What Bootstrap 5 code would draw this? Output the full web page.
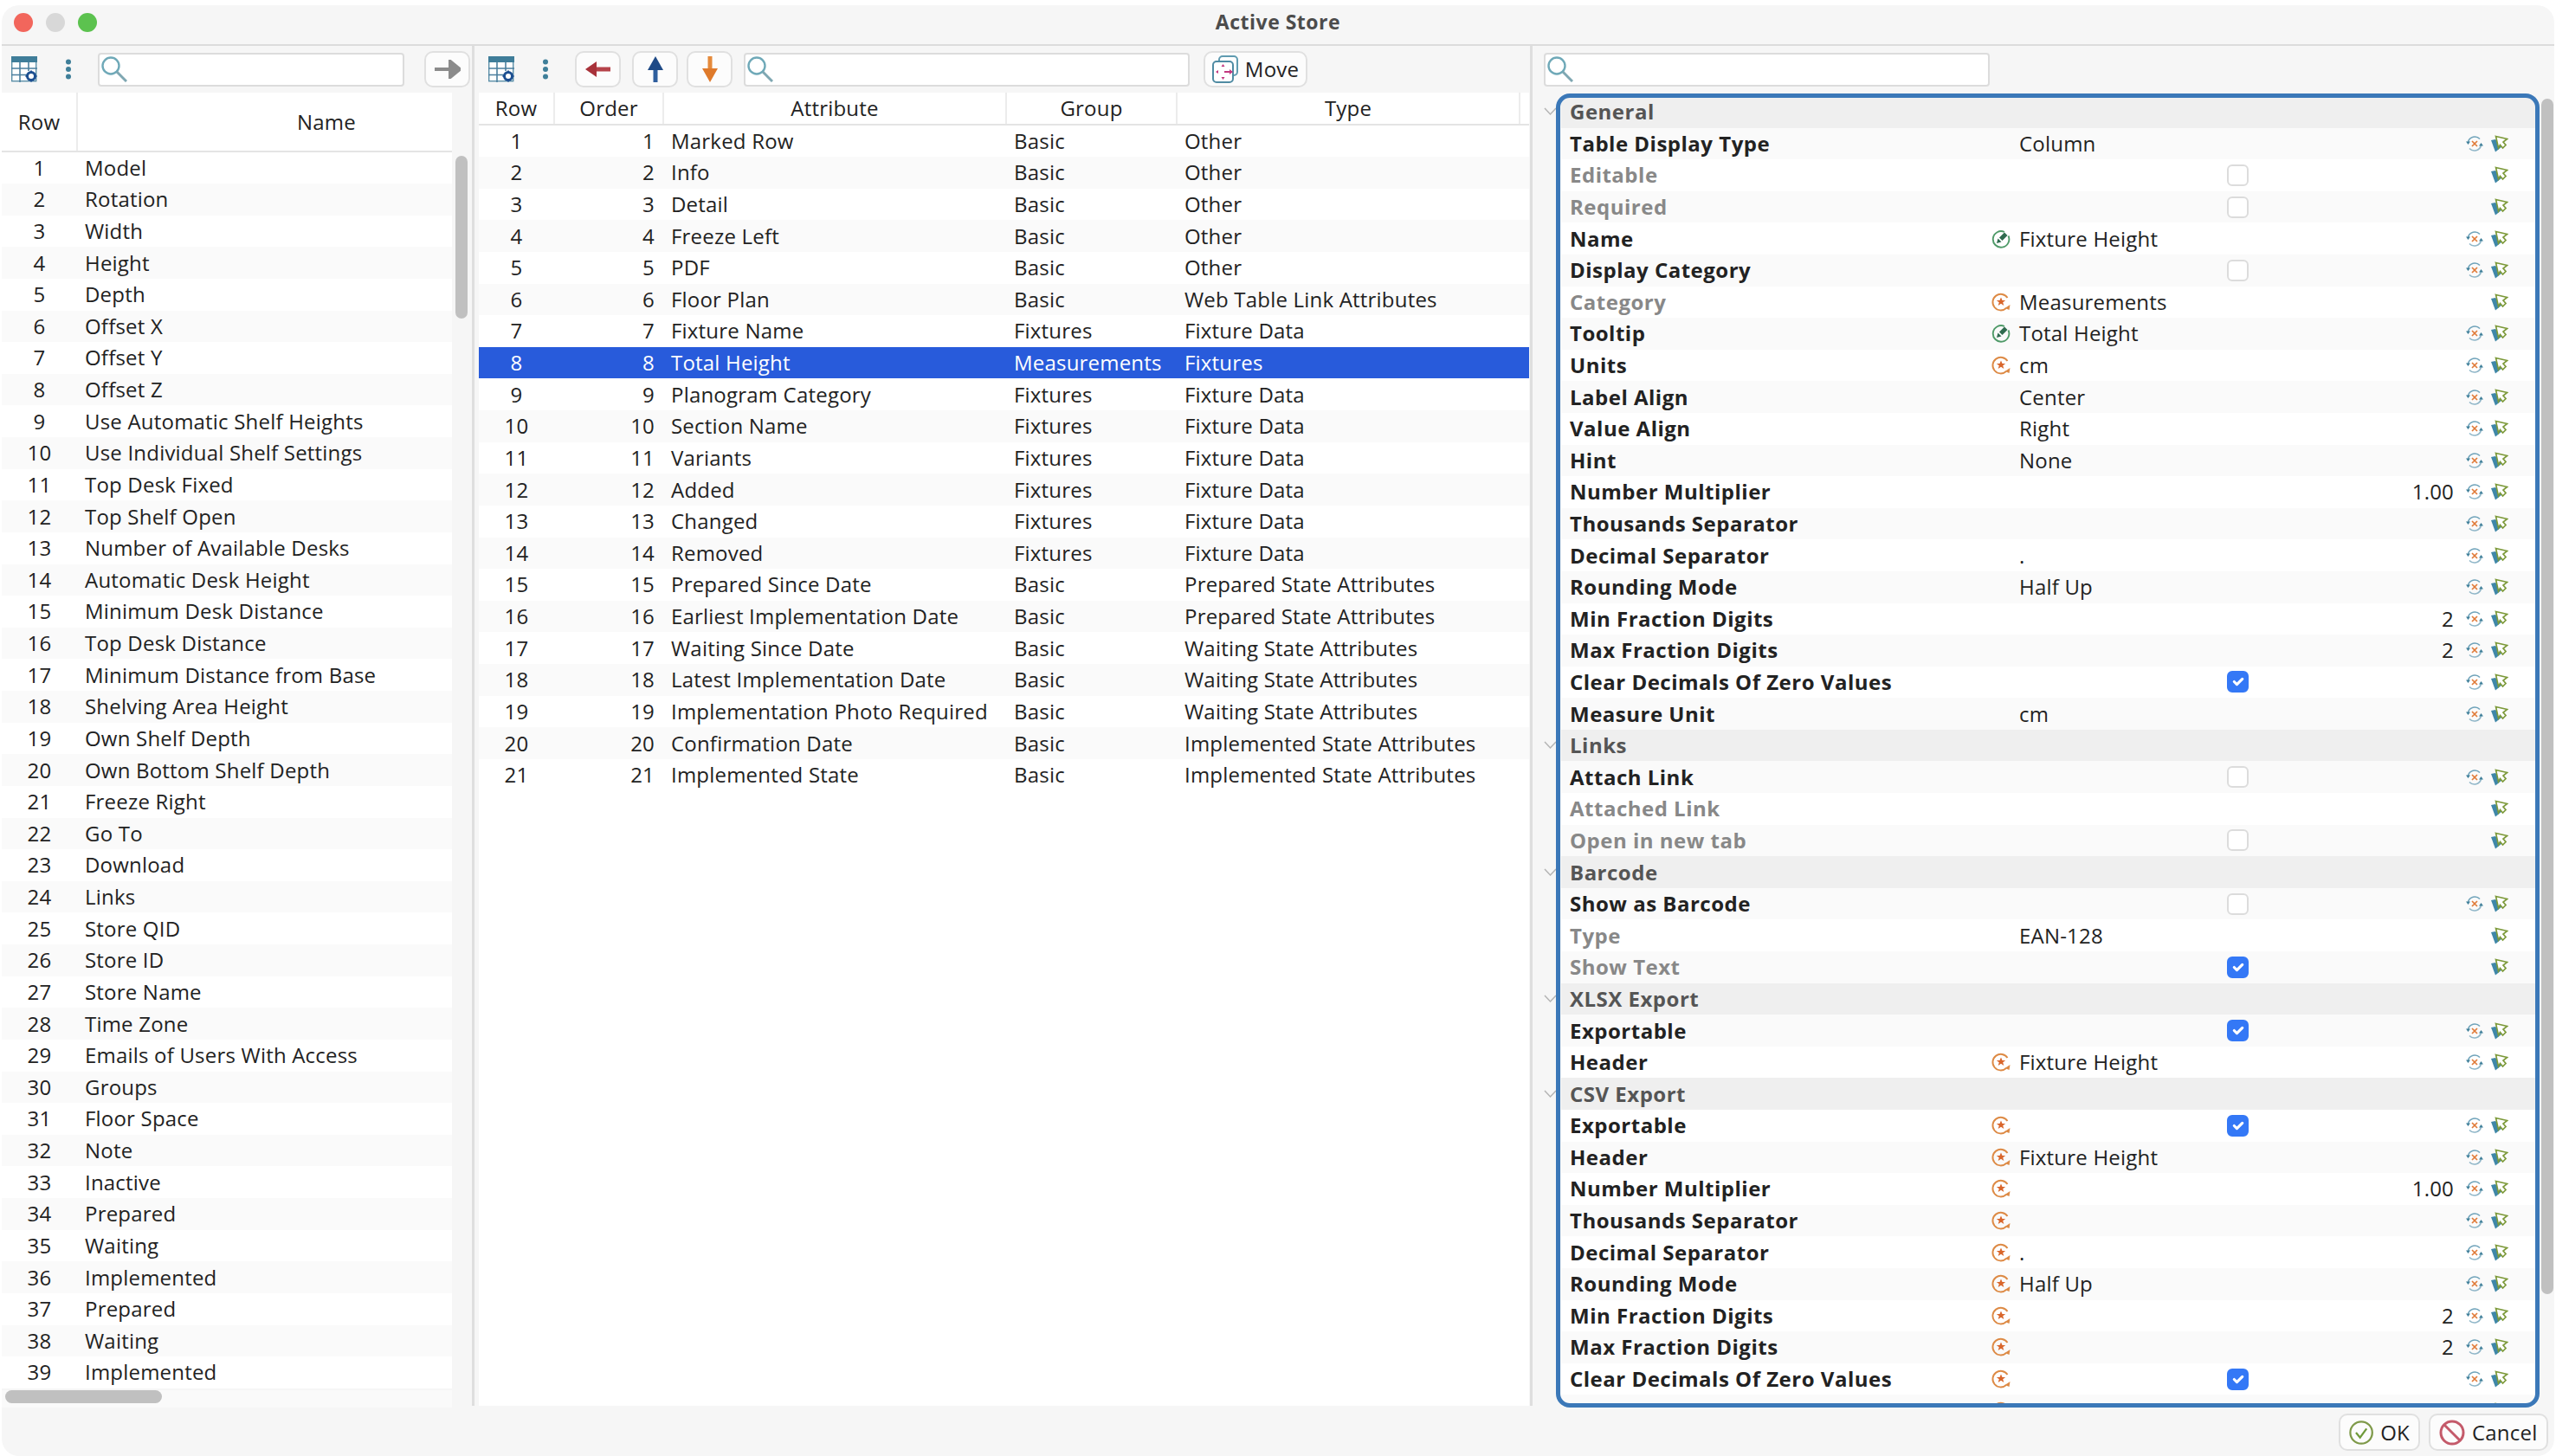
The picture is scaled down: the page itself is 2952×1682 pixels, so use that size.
<!DOCTYPE html>
<html lang="en">
<head>
    <meta charset="UTF-8">
    <title>Active Store</title>
    <link href="https://cdn.jsdelivr.net/npm/bootstrap@5.3.0/dist/css/bootstrap.min.css" rel="stylesheet">
    <style>
        html, body { height: 100%; overflow: hidden; }
        body { background: #fff; font-family: "Open Sans", "Noto Sans", sans-serif; font-size: 24px; letter-spacing: .2px; color: #222; }
        .app-window { margin: 6px 2px 0 2px; height: 1676px; background: #f6f6f6; border-radius: 20px; overflow: hidden; }
        .title-bar { height: 47px; padding-bottom: 6px; border-bottom: 2px solid #dcdcdc; position: relative; }
        .title-text { font-weight: 700; color: #4c4c4c; font-size: 23px; letter-spacing: .5px; }
        .light { width: 22px; height: 22px; border-radius: 50%; }
        .lights { position: absolute; left: 14px; top: 9px; gap: 15px; }
        .work { height: 1571px; }
        .left-pane { width: 546px; }
        .mid-pane { width: 1222px; }
        .pane-split { border-right: 3px solid #dedede; }
        .tool-row { height: 54px; }
        .search-box { height: 39px; border: 2px solid #dcdcdc; border-radius: 4px; background: #fff; padding: 0 0 0 2px; }
        .tool-btn { width: 53px; height: 42px; padding: 0; border: 2px solid #e0e0e0; border-radius: 10px; background: #fcfcfc; color: #222; font-size: 24px; letter-spacing: .2px; }
        .tool-btn:hover { background: #fff; }
        .grid-tbl { table-layout: fixed; width: 100%; margin: 0; border-collapse: collapse; }
        .grid-tbl th { font-weight: 400; text-align: center; border-right: 2px solid #ececec; border-bottom: 2px solid #e4e4e4; padding: 0; background: #fff; }
        .grid-tbl td { height: 36.63px; padding: 0 0 0 9px; white-space: nowrap; overflow: hidden; }
        .grid-tbl tbody tr:nth-child(even) td { background: #fafafa; }
        .grid-tbl tbody tr:nth-child(odd) td { background: #fff; }
        .grid-tbl tbody tr.row-sel td { background: #285bdb; color: #fff; }
        .grid-tbl td.num-c { text-align: center; padding: 0; }
        .grid-tbl td.num-r { text-align: right; padding: 0 10px 0 0; }
        .left-tbl th { height: 68px; }
        .left-tbl th.name-head { padding-left: 142px; border-right: 0; }
        .mid-tbl th { height: 37px; }
        .left-table-wrap { width: 520px; height: 1497px; overflow: hidden; background: #fff; }
        .mid-table-wrap { width: 1213px; height: 1517px; overflow: hidden; background: #fff; margin-left: 5px; }
        .hbar { height: 15px; width: 181px; margin: 2px 0 0 4px; background: #c0c0c0; border-radius: 8px; }
        .hbar-track { height: 20px; width: 520px; background: #fafafa; }
        .vbar-left { position: absolute; left: 524px; top: 127px; width: 14px; height: 188px; background: #c0c0c0; border-radius: 7px; }
        .vbar-right { position: absolute; right: 1px; top: 61px; width: 14px; height: 1381px; background: #c0c0c0; border-radius: 7px; }
        .prop-scroll { height: 1518px; overflow: hidden; padding-top: 4px; }
        .prop-row { height: 36.6px; }
        .prop-gutter { width: 33px; flex: none; padding-left: 13px; line-height: 0; }
        .prop-body { width: 1126px; flex: none; height: 100%; }
        .prop-body.stripe { background: #fafafa; }
        .prop-body.plain { background: #fff; }
        .prop-body.group-head { background: #efefef; font-weight: 700; letter-spacing: .5px; color: #555; padding-left: 10px; }
        .prop-label { width: 488px; padding-left: 10px; flex: none; font-weight: 700; letter-spacing: .5px; color: #222; }
        .prop-label.off { color: #888; }
        .prop-src { width: 39px; flex: none; text-align: center; line-height: 0; }
        .prop-val { width: 242px; flex: none; padding-left: 2px; }
        .prop-check { width: 27px; flex: none; line-height: 0; }
        .prop-check .form-check-input { width: 25px; height: 25px; margin: 0; border: 2px solid #dcdcdc; border-radius: 6px; opacity: 1; }
        .prop-check .form-check-input:checked { background-color: #3478f6; border-color: #3478f6; }
        .prop-num { width: 244px; flex: none; text-align: right; padding-right: 9px; }
        .prop-act { width: 29px; flex: none; line-height: 0; text-align: center; }
        .focus-ring-box { position: absolute; left: 27px; right: 17px; top: 55px; bottom: -2px; border: 5px solid #3b78b8; border-radius: 16px; pointer-events: none; }
        .foot-bar { height: 58px; padding: 9px 7px 0 0; gap: 10px; }
        .foot-btn { height: 43px; border: 2px solid #e0e0e0; border-radius: 10px; background: #fcfcfc; padding: 0 10px; font-size: 24px; letter-spacing: .2px; color: #222; }
    </style>
</head>
<body>
    <svg width="0" height="0" class="position-absolute">
        <defs>
            <symbol id="i-grid" viewBox="0 0 30 30">
                <rect x="0.7" y="0.7" width="28" height="28" fill="#fff" stroke="#5b8fa8" stroke-width="1.4"/>
                <rect x="0" y="0" width="30" height="7" fill="#3f7d99"/>
                <path d="M0 14h30M0 21.500h19M10 7v23M20 7v10" stroke="#4b7f9e" stroke-width="1.6" fill="none"/>
                <circle cx="23" cy="23" r="4.500" fill="#fff" stroke="#1d4f91" stroke-width="3"/>
                <path d="M23 16.500v2M23 27.500v2M16.500 23h2M27.500 23h2" stroke="#1d4f91" stroke-width="2"/>
            </symbol>
            <symbol id="i-dots" viewBox="0 0 8 24">
                <circle cx="4" cy="3.500" r="3" fill="#3f7f99"/><circle cx="4" cy="12" r="3" fill="#3f7f99"/><circle cx="4" cy="20.500" r="3" fill="#3f7f99"/>
            </symbol>
            <symbol id="i-search" viewBox="0 0 30 30">
                <circle cx="11" cy="11" r="9.500" fill="none" stroke="#6fa9b8" stroke-width="2.400"/>
                <path d="M18 18l11 11" stroke="#7fa7b2" stroke-width="3"/>
            </symbol>
            <symbol id="i-revert" viewBox="0 0 20 20">
                <path d="M2.500 8A8 8 0 0 1 16 4.500" fill="none" stroke="#6fa3ba" stroke-width="1.600"/>
                <path d="M17.500 12A8 8 0 0 1 4 15.500" fill="none" stroke="#8fb6c8" stroke-width="1.600"/>
                <path d="M0 7.500l2.500 3.500 2.500-3.500zM15 12.500l2.500-3.500 2.500 3.500z" fill="#3f7f99"/>
                <path d="M7 7l6 6M13 7l-6 6" stroke="#e07b39" stroke-width="1.700"/>
            </symbol>
            <symbol id="i-cursor" viewBox="0 0 20 20">
                <path d="M0 6l5 13.500 8-6.500-8-8z" fill="#3f87a8"/>
                <path d="M5.500 1.500L18.500 4.500l-4.500 3.500 3 3.500-3.500 3.500-3-3.500-2 3.500z" fill="#fff" stroke="#7d9a3a" stroke-width="1.700" stroke-linejoin="miter"/>
            </symbol>
            <symbol id="i-src-green" viewBox="0 0 22 22">
                <path d="M15 3A9.300 9.300 0 1 0 19.500 7.500" fill="none" stroke="#4f9a68" stroke-width="1.900"/>
                <path d="M6 16l1.500-5.500 4 4z" fill="#2f6b4f"/><path d="M9 9.500l6-6 3.500 3.500-6 6z" fill="#2f6b4f"/>
            </symbol>
            <symbol id="i-src-orange" viewBox="0 0 22 22">
                <path d="M18.500 6A9.300 9.300 0 1 0 17 18" fill="none" stroke="#dd8a45" stroke-width="1.900"/>
                <path d="M11 5.500l1.500 3.500h3.700l-3 2.300 1.100 3.700-3.300-2.200-3.300 2.200 1.100-3.700-3-2.300h3.700z" fill="#d9662b"/>
                <path d="M21.500 14l-1 6-5-2z" fill="#dd8a45"/>
            </symbol>
        </defs>
    </svg>

    <div class="app-window d-flex flex-column position-relative">
        <div class="title-bar d-flex align-items-center justify-content-center flex-shrink-0">
            <div class="lights d-flex">
                <div class="light" style="background:#f2665c"></div>
                <div class="light" style="background:#d8d8d8"></div>
                <div class="light" style="background:#5cc24f"></div>
            </div>
            <span class="title-text">Active Store</span>
        </div>

        <div class="work d-flex">
            <!-- Left pane -->
            <div class="left-pane pane-split flex-shrink-0 position-relative">
                <div class="tool-row d-flex align-items-center">
                    <svg width="30" height="30" style="margin-left:11px"><use href="#i-grid"/></svg>
                    <svg width="8" height="24" style="margin-left:32px"><use href="#i-dots"/></svg>
                    <div class="search-box d-flex align-items-center" style="width:354px;margin-left:30px">
                        <svg width="30" height="30"><use href="#i-search"/></svg>
                    </div>
                    <button class="btn tool-btn d-flex align-items-center justify-content-center" style="margin-left:23px">
                        <svg width="30" height="22" viewBox="0 0 30 22"><path d="M0 11h18M18 2l11 9-11 9z" stroke="#8b8b8b" stroke-width="4" fill="#8b8b8b" stroke-linejoin="miter"/></svg>
                    </button>
                </div>
                <div class="left-table-wrap" id="leftWrap"></div>
                <div class="hbar-track"><div class="hbar"></div></div>
                <div class="vbar-left"></div>
            </div>

            <!-- Middle pane -->
            <div class="mid-pane pane-split flex-shrink-0">
                <div class="tool-row d-flex align-items-center">
                    <svg width="30" height="30" style="margin-left:16px"><use href="#i-grid"/></svg>
                    <svg width="8" height="24" style="margin-left:32px"><use href="#i-dots"/></svg>
                    <button class="btn tool-btn d-flex align-items-center justify-content-center" style="margin-left:30px">
                        <svg width="30" height="20" viewBox="0 0 30 20"><path d="M12 10h17" stroke="#b5434a" stroke-width="5"/><path d="M0 10L13 1v18z" fill="#a8323a"/></svg>
                    </button>
                    <button class="btn tool-btn d-flex align-items-center justify-content-center" style="margin-left:13px">
                        <svg width="20" height="30" viewBox="0 0 20 30"><path d="M10 12v18" stroke="#2f5f9e" stroke-width="5"/><path d="M10 0l9 16H1z" fill="#1f4a86"/></svg>
                    </button>
                    <button class="btn tool-btn d-flex align-items-center justify-content-center" style="margin-left:10px">
                        <svg width="20" height="30" viewBox="0 0 20 30"><path d="M10 0v18" stroke="#e58a3b" stroke-width="5"/><path d="M10 30l9-16H1z" fill="#df7a2b"/></svg>
                    </button>
                    <div class="search-box d-flex align-items-center" style="width:515px;margin-left:13px">
                        <svg width="30" height="30"><use href="#i-search"/></svg>
                    </div>
                    <button class="btn tool-btn d-flex align-items-center justify-content-center gap-2" style="width:120px;margin-left:16px">
                        <svg width="30" height="32" viewBox="0 0 30 32">
                            <rect x="8" y="1" width="21" height="22" rx="4" fill="#fff" stroke="#5f9bb0" stroke-width="2"/>
                            <rect x="1" y="7" width="23" height="24" rx="4" fill="#fff" stroke="#4f8ba3" stroke-width="2"/>
                            <path d="M12.500 10l2 3h-4zM12.500 28l2-3h-4zM4 19l3-2v4zM24 19l-4-3v6z" fill="#c2377f"/>
                            <path d="M14 19h7" stroke="#c2377f" stroke-width="2"/>
                        </svg>
                        <span>Move</span>
                    </button>
                </div>
                <div class="mid-table-wrap" id="midWrap"></div>
            </div>

            <!-- Right pane -->
            <div class="flex-grow-1 position-relative">
                <div class="tool-row d-flex align-items-center">
                    <div class="search-box d-flex align-items-center" style="width:515px;margin-left:13px">
                        <svg width="30" height="30"><use href="#i-search"/></svg>
                    </div>
                </div>
                <div class="prop-scroll" id="propList"></div>
                <div class="vbar-right"></div>
                <div class="focus-ring-box"></div>
            </div>
        </div>

        <div class="foot-bar d-flex justify-content-end">
            <button class="btn foot-btn d-flex align-items-center gap-2" style="width:94px">
                <svg width="30" height="30" viewBox="0 0 30 30"><circle cx="15" cy="15" r="13.500" fill="none" stroke="#7f9a4a" stroke-width="2.400"/><path d="M8.500 15l5 6 8-11" fill="none" stroke="#6f9a3a" stroke-width="2.400"/></svg>
                <span>OK</span>
            </button>
            <button class="btn foot-btn d-flex align-items-center gap-2" style="width:138px">
                <svg width="30" height="30" viewBox="0 0 30 30"><circle cx="15" cy="15" r="13" fill="none" stroke="#c45a6a" stroke-width="3"/><path d="M6 6l18 18" stroke="#c45a6a" stroke-width="3"/></svg>
                <span>Cancel</span>
            </button>
        </div>
    </div>

    <script src="https://cdn.jsdelivr.net/npm/bootstrap@5.3.0/dist/js/bootstrap.bundle.min.js"></script>
    <script>
        const leftNames = ['Model','Rotation','Width','Height','Depth','Offset X','Offset Y','Offset Z','Use Automatic Shelf Heights','Use Individual Shelf Settings','Top Desk Fixed','Top Shelf Open','Number of Available Desks','Automatic Desk Height','Minimum Desk Distance','Top Desk Distance','Minimum Distance from Base','Shelving Area Height','Own Shelf Depth','Own Bottom Shelf Depth','Freeze Right','Go To','Download','Links','Store QID','Store ID','Store Name','Time Zone','Emails of Users With Access','Groups','Floor Space','Note','Inactive','Prepared','Waiting','Implemented','Prepared','Waiting','Implemented'];

        let leftHtml = '<table class="grid-tbl left-tbl"><colgroup><col style="width:87px"><col></colgroup><thead><tr><th>Row</th><th class="name-head">Name</th></tr></thead><tbody>';
        leftNames.forEach((n, i) => {
            leftHtml += `<tr><td class="num-c">${i + 1}</td><td>${n}</td></tr>`;
        });
        document.getElementById('leftWrap').innerHTML = leftHtml + '</tbody></table>';

        const attrs = [
            ['Marked Row','Basic','Other'],['Info','Basic','Other'],['Detail','Basic','Other'],['Freeze Left','Basic','Other'],['PDF','Basic','Other'],
            ['Floor Plan','Basic','Web Table Link Attributes'],['Fixture Name','Fixtures','Fixture Data'],['Total Height','Measurements','Fixtures'],
            ['Planogram Category','Fixtures','Fixture Data'],['Section Name','Fixtures','Fixture Data'],['Variants','Fixtures','Fixture Data'],
            ['Added','Fixtures','Fixture Data'],['Changed','Fixtures','Fixture Data'],['Removed','Fixtures','Fixture Data'],
            ['Prepared Since Date','Basic','Prepared State Attributes'],['Earliest Implementation Date','Basic','Prepared State Attributes'],
            ['Waiting Since Date','Basic','Waiting State Attributes'],['Latest Implementation Date','Basic','Waiting State Attributes'],
            ['Implementation Photo Required','Basic','Waiting State Attributes'],['Confirmation Date','Basic','Implemented State Attributes'],
            ['Implemented State','Basic','Implemented State Attributes']
        ];
        let midHtml = '<table class="grid-tbl mid-tbl"><colgroup><col style="width:87px"><col style="width:126px"><col style="width:396px"><col style="width:197px"><col style="width:396px"><col></colgroup><thead><tr><th>Row</th><th>Order</th><th>Attribute</th><th>Group</th><th>Type</th><th style="border-right:0"></th></tr></thead><tbody>';
        attrs.forEach((a, i) => {
            midHtml += `<tr class="${i === 7 ? 'row-sel' : ''}"><td class="num-c">${i + 1}</td><td class="num-r">${i + 1}</td><td>${a[0]}</td><td>${a[1]}</td><td>${a[2]}</td><td></td></tr>`;
        });
        document.getElementById('midWrap').innerHTML = midHtml + '</tbody></table>';

        // g = group header, otherwise l label, s source icon, v value, c checkbox, n number, off disabled
        const G = 'green', O = 'orange';
        const props = [
            {g:'General'},
            {l:'Table Display Type', v:'Column'},
            {l:'Editable', c:0, off:1},
            {l:'Required', c:0, off:1},
            {l:'Name', s:G, v:'Fixture Height'},
            {l:'Display Category', c:0},
            {l:'Category', s:O, v:'Measurements', off:1},
            {l:'Tooltip', s:G, v:'Total Height'},
            {l:'Units', s:O, v:'cm'},
            {l:'Label Align', v:'Center'},
            {l:'Value Align', v:'Right'},
            {l:'Hint', v:'None'},
            {l:'Number Multiplier', n:'1.00'},
            {l:'Thousands Separator'},
            {l:'Decimal Separator', v:'.'},
            {l:'Rounding Mode', v:'Half Up'},
            {l:'Min Fraction Digits', n:'2'},
            {l:'Max Fraction Digits', n:'2'},
            {l:'Clear Decimals Of Zero Values', c:1},
            {l:'Measure Unit', v:'cm'},
            {g:'Links'},
            {l:'Attach Link', c:0},
            {l:'Attached Link', off:1},
            {l:'Open in new tab', c:0, off:1},
            {g:'Barcode'},
            {l:'Show as Barcode', c:0},
            {l:'Type', v:'EAN-128', off:1},
            {l:'Show Text', c:1, off:1},
            {g:'XLSX Export'},
            {l:'Exportable', c:1},
            {l:'Header', s:O, v:'Fixture Height'},
            {g:'CSV Export'},
            {l:'Exportable', s:O, c:1},
            {l:'Header', s:O, v:'Fixture Height'},
            {l:'Number Multiplier', s:O, n:'1.00'},
            {l:'Thousands Separator', s:O},
            {l:'Decimal Separator', s:O, v:'.'},
            {l:'Rounding Mode', s:O, v:'Half Up'},
            {l:'Min Fraction Digits', s:O, n:'2'},
            {l:'Max Fraction Digits', s:O, n:'2'},
            {l:'Clear Decimals Of Zero Values', s:O, c:1},
            {l:'', s:O}
        ];

        const chevron = '<svg width="15" height="10" viewBox="0 0 15 10"><path d="M1 1l6.500 7 6.500-7" fill="none" stroke="#b4b4b4" stroke-width="1.500"/></svg>';
        let propHtml = '';
        props.forEach((p, i) => {
            if (p.g) {
                propHtml += `<div class="prop-row d-flex align-items-center"><div class="prop-gutter">${chevron}</div><div class="prop-body group-head d-flex align-items-center">${p.g}</div></div>`;
                return;
            }
            const src = p.s ? `<svg width="22" height="22"><use href="#i-src-${p.s}"/></svg>` : '';
            const chk = p.c === undefined ? '' : `<input class="form-check-input" type="checkbox" ${p.c ? 'checked' : ''}>`;
            const rev = p.off ? '' : '<svg width="20" height="20"><use href="#i-revert"/></svg>';
            propHtml += `<div class="prop-row d-flex align-items-center"><div class="prop-gutter"></div>
                <div class="prop-body ${i % 2 ? 'stripe' : 'plain'} d-flex align-items-center">
                    <div class="prop-label ${p.off ? 'off' : ''}">${p.l}</div>
                    <div class="prop-src">${src}</div>
                    <div class="prop-val">${p.v || ''}</div>
                    <div class="prop-check">${chk}</div>
                    <div class="prop-num">${p.n || ''}</div>
                    <div class="prop-act">${rev}</div>
                    <div class="prop-act"><svg width="20" height="20"><use href="#i-cursor"/></svg></div>
                </div></div>`;
        });
        document.getElementById('propList').innerHTML = propHtml;
    </script>
</body>
</html>
